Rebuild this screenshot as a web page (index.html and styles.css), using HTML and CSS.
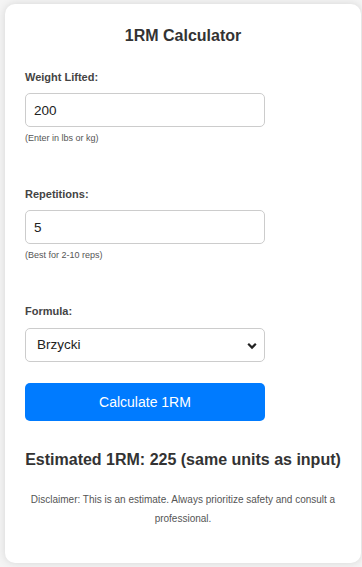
FILE: index.html
```html
<!DOCTYPE html>
<html lang="en">
<head>
<meta charset="utf-8">
<title>1RM Calculator</title>
<link rel="stylesheet" href="styles.css">
</head>
<body>
<div class="card">
  <h2 class="title">1RM Calculator</h2>
  <div class="group">
    <label class="label" for="weight">Weight Lifted:</label>
    <input class="field" id="weight" type="number" value="200">
    <small class="hint">(Enter in lbs or kg)</small>
  </div>
  <div class="group">
    <label class="label" for="reps">Repetitions:</label>
    <input class="field" id="reps" type="number" value="5">
    <small class="hint">(Best for 2-10 reps)</small>
  </div>
  <div class="group group-last">
    <label class="label label-select" for="formula">Formula:</label>
    <div class="select-wrap">
      <select class="field select" id="formula">
        <option>Brzycki</option>
        <option>Epley</option>
        <option>Lombardi</option>
      </select>
      <svg class="chevron" width="10" height="8" viewBox="0 0 10 8" aria-hidden="true"><path d="M1.2 1.8 L5 5.6 L8.8 1.8" fill="none" stroke="#222" stroke-width="2.2"/></svg>
    </div>
  </div>
  <button class="btn" type="button">Calculate 1RM</button>
  <h3 class="result">Estimated 1RM: 225 (same units as input)</h3>
  <p class="disclaimer">Disclaimer: This is an estimate. Always prioritize safety and consult a professional.</p>
</div>
</body>
</html>
```

FILE: styles.css
```css
html, body {
  margin: 0;
}
body {
  background: #f4f4f4;
  padding: 4px 1px 5px 5px;
  font-family: "Liberation Sans", Arial, sans-serif;
  color: #333;
}
.card {
  background: #fff;
  border-radius: 10px;
  box-shadow: 0 0 8px rgba(0, 0, 0, 0.12);
  padding: 23px 20px 20px;
}
.title {
  margin: 0 0 26px;
  font-size: 16px;
  line-height: 18px;
  font-weight: bold;
  text-align: center;
  color: #333;
}
.group {
  margin-bottom: 45px;
}
.group-last {
  margin-bottom: 21px;
}
.label {
  display: block;
  font-size: 11px;
  line-height: 13px;
  font-weight: bold;
  color: #444;
  margin-bottom: 9px;
}
.label-select {
  margin-bottom: 10px;
}
.field {
  display: block;
  box-sizing: border-box;
  width: 240px;
  height: 34px;
  margin: 0;
  padding: 8px;
  border: 1px solid #ccc;
  border-radius: 5px;
  font-family: "Liberation Sans", Arial, sans-serif;
  font-size: 13.5px;
  line-height: 16px;
  color: #222;
  background: #fff;
  outline: none;
}
input[type=number]::-webkit-inner-spin-button,
input[type=number]::-webkit-outer-spin-button {
  -webkit-appearance: none;
  margin: 0;
}
.hint {
  display: block;
  margin-top: 6px;
  font-size: 9px;
  line-height: 10px;
  color: #555;
}
.select-wrap {
  position: relative;
  width: 240px;
}
.select {
  -webkit-appearance: none;
  appearance: none;
  padding: 8px 24px 8px 11px;
}
.chevron {
  position: absolute;
  right: 8px;
  top: 14px;
  pointer-events: none;
}
.btn {
  display: block;
  width: 240px;
  height: 38px;
  border: 0;
  border-radius: 5px;
  background: #007bff;
  color: #fff;
  font-family: "Liberation Sans", Arial, sans-serif;
  font-size: 14px;
  line-height: 18px;
  padding: 10px;
  cursor: pointer;
}
.result {
  margin: 30px 0 0;
  font-size: 16px;
  line-height: 18px;
  font-weight: bold;
  text-align: center;
  color: #333;
}
.disclaimer {
  margin: 21px 0 15px;
  font-size: 10px;
  line-height: 19px;
  text-align: center;
  color: #555;
}
```
